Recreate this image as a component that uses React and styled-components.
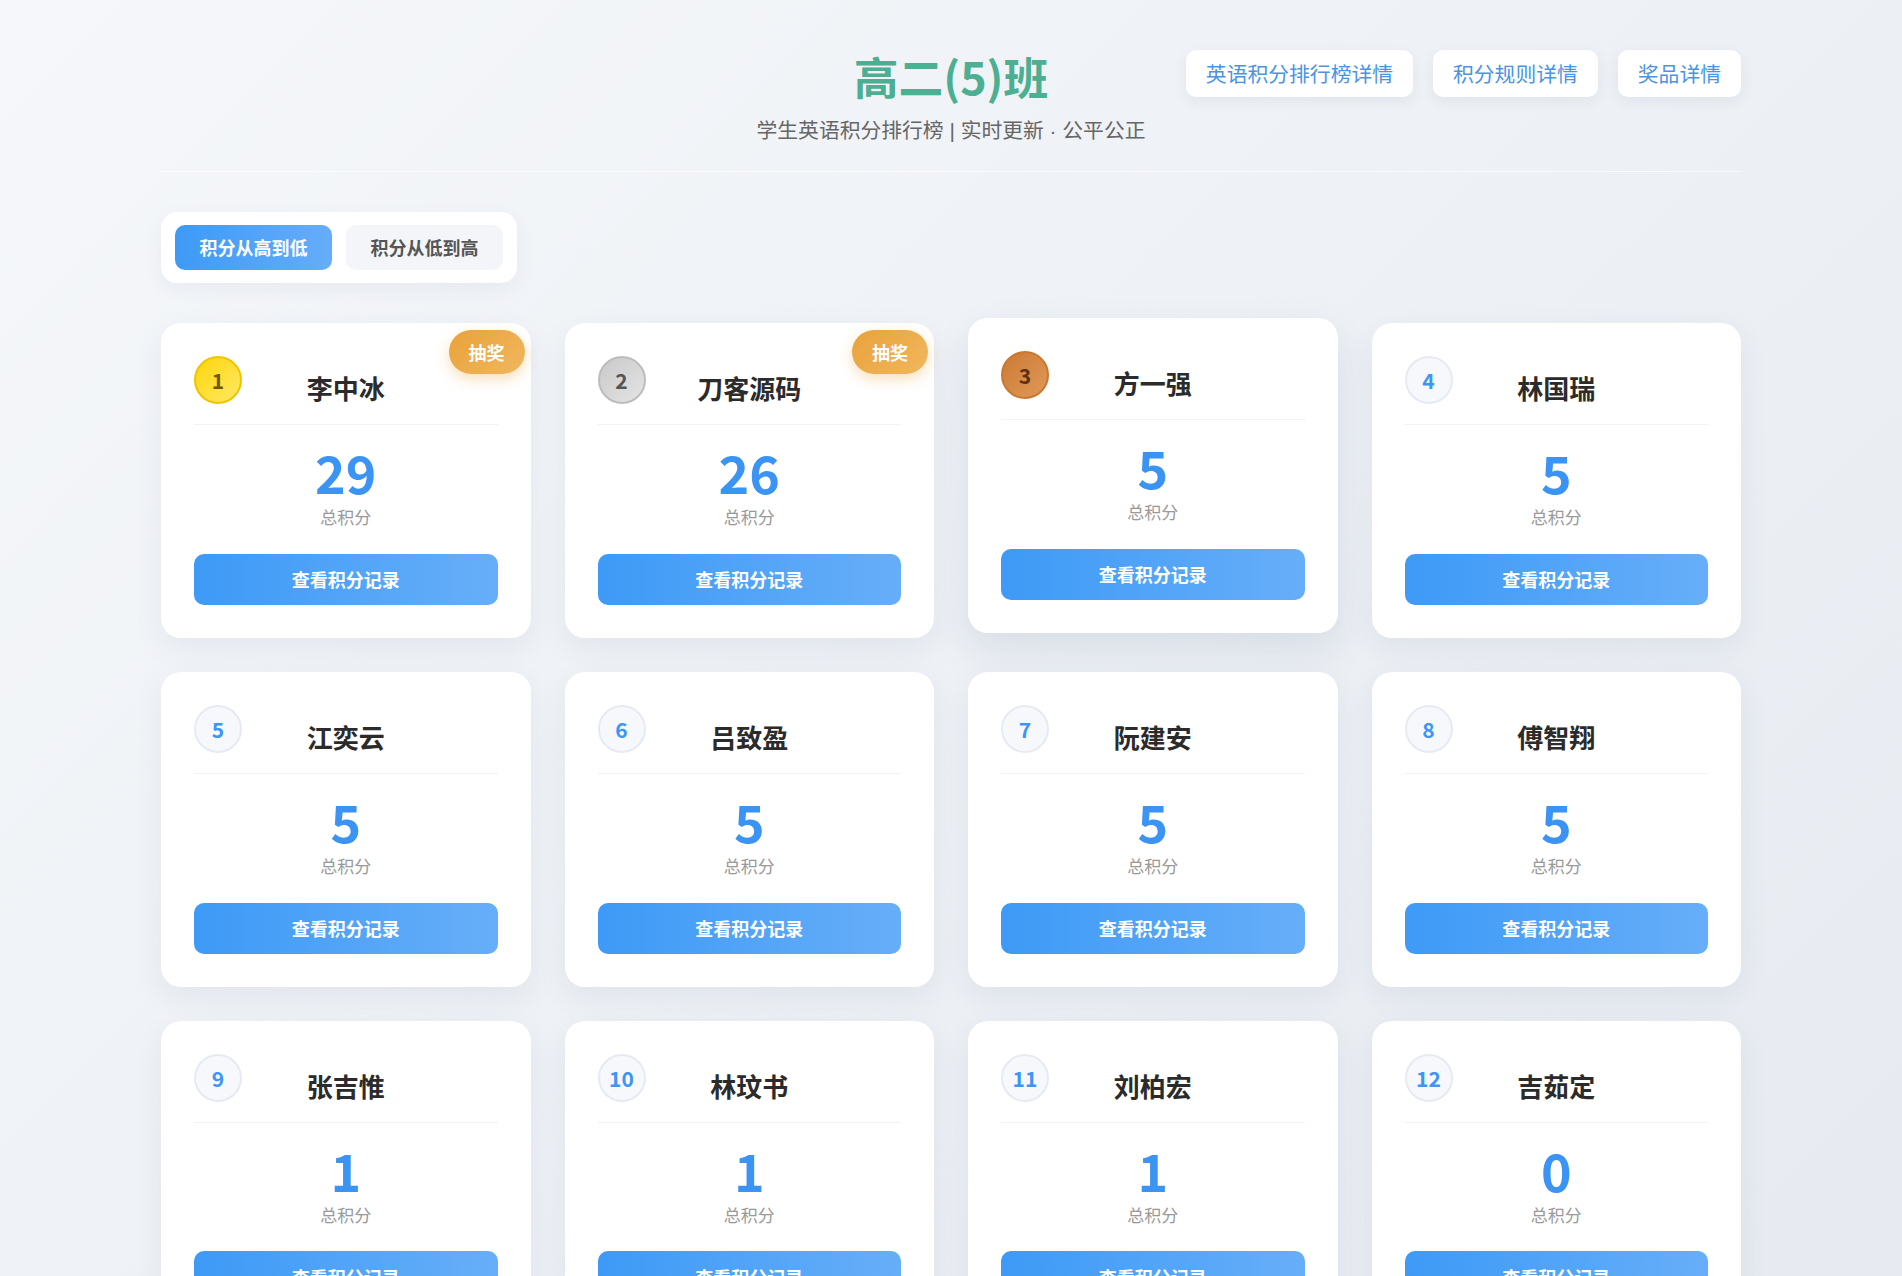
import styled, { createGlobalStyle, css } from 'styled-components';

const students = [
  { rank: 1, name: '李中冰', score: 29, lottery: true },
  { rank: 2, name: '刀客源码', score: 26, lottery: true },
  { rank: 3, name: '方一强', score: 5, raised: true },
  { rank: 4, name: '林国瑞', score: 5 },
  { rank: 5, name: '江奕云', score: 5 },
  { rank: 6, name: '吕致盈', score: 5 },
  { rank: 7, name: '阮建安', score: 5 },
  { rank: 8, name: '傅智翔', score: 5 },
  { rank: 9, name: '张吉惟', score: 1 },
  { rank: 10, name: '林玟书', score: 1 },
  { rank: 11, name: '刘柏宏', score: 1 },
  { rank: 12, name: '吉茹定', score: 0 },
];

const GlobalStyle = createGlobalStyle`
  * { box-sizing: border-box; }
  body {
    margin: 0;
    font-family: "Noto Sans CJK SC", "Noto Sans", sans-serif;
    background: linear-gradient(135deg, #f5f7fa 0%, #e6eaf0 100%);
    min-height: 100vh;
    color: #333;
  }
`;

function App() {
  return (
    <>
      <GlobalStyle />
      <Page>
        <Header>
          <span />
          <TitleBlock>
            <Title>高二(5)班</Title>
            <Subtitle>学生英语积分排行榜 | 实时更新 · 公平公正</Subtitle>
          </TitleBlock>
          <HeaderLinks>
            <LinkButton>英语积分排行榜详情</LinkButton>
            <LinkButton>积分规则详情</LinkButton>
            <LinkButton>奖品详情</LinkButton>
          </HeaderLinks>
        </Header>

        <SortPanel>
          <SortButton active>积分从高到低</SortButton>
          <SortButton>积分从低到高</SortButton>
        </SortPanel>

        <Grid>
          {students.map((s) => (
            <Card key={s.rank} raised={s.raised}>
              {s.lottery && <LotteryTag>抽奖</LotteryTag>}
              <CardHeader>
                <RankBadge rank={s.rank}>{s.rank}</RankBadge>
                <Name>{s.name}</Name>
              </CardHeader>
              <Score>{s.score}</Score>
              <ScoreLabel>总积分</ScoreLabel>
              <RecordButton>查看积分记录</RecordButton>
            </Card>
          ))}
        </Grid>
      </Page>
    </>
  );
}

export default App;

const Page = styled.div`
  max-width: 1580px;
  margin: 0 auto;
  padding: 49px 0 40px;
`;

const Header = styled.header`
  display: grid;
  grid-template-columns: 1fr auto 1fr;
  align-items: start;
  padding-bottom: 25px;
  border-bottom: 1px solid #fafbfc;
  margin-bottom: 40px;
`;

const TitleBlock = styled.div`
  text-align: center;
`;

const Title = styled.h1`
  margin: 0;
  font-size: 44.8px;
  line-height: 1.2;
  font-weight: 700;
  color: #4caf91;
`;

const Subtitle = styled.p`
  margin: 12px 0 0;
  font-family: "Liberation Sans", "Noto Sans CJK SC", sans-serif;
  font-size: 20.8px;
  line-height: 1.5;
  color: #666;
`;

const HeaderLinks = styled.div`
  display: flex;
  justify-content: flex-end;
  gap: 20px;
  margin-top: 1px;
`;

const LinkButton = styled.button`
  font-family: inherit;
  font-size: 20.8px;
  line-height: 1.3;
  padding: 10px 20px;
  border: none;
  border-radius: 10px;
  background: #fff;
  color: #4a94e2;
  box-shadow: 0 4px 14px rgba(40, 70, 120, 0.07);
  cursor: pointer;
`;

const SortPanel = styled.div`
  display: inline-flex;
  gap: 14px;
  padding: 13px 14px;
  background: #fff;
  border-radius: 16px;
  box-shadow: 0 6px 20px rgba(40, 70, 120, 0.06);
  margin-bottom: 40px;
`;

const SortButton = styled.button`
  font-family: inherit;
  width: 157px;
  height: 45px;
  border: none;
  border-radius: 10px;
  font-size: 18px;
  font-weight: 700;
  cursor: pointer;
  ${({ active }) =>
    active
      ? css`
          background: linear-gradient(90deg, #3d9af6, #66adf9);
          color: #fff;
        `
      : css`
          background: #f3f5f8;
          color: #555;
        `}
`;

const Grid = styled.div`
  display: grid;
  grid-template-columns: repeat(4, 1fr);
  gap: 34px;
`;

const Card = styled.div`
  position: relative;
  background: #fff;
  border-radius: 20px;
  padding: 33px;
  text-align: center;
  box-shadow: 0 10px 30px rgba(40, 70, 120, 0.07);
  ${({ raised }) =>
    raised &&
    css`
      transform: translateY(-5px);
      box-shadow: 0 16px 38px rgba(40, 70, 120, 0.11);
    `}
`;

const LotteryTag = styled.span`
  position: absolute;
  top: 7px;
  right: 6px;
  height: 44px;
  padding: 0 20px;
  display: flex;
  align-items: center;
  border-radius: 22px;
  background: linear-gradient(135deg, #e8a23a, #f1b75e);
  color: #fff;
  font-size: 18px;
  font-weight: 700;
  box-shadow: 0 5px 14px rgba(232, 162, 58, 0.35);
`;

const CardHeader = styled.div`
  position: relative;
  padding: 14px 0 18px;
  border-bottom: 1px solid #f0f2f5;
`;

const rankStyles = {
  1: css`
    background: linear-gradient(135deg, #ffd60a, #ffe866);
    border: 2px solid #f0c400;
    color: #6f5600;
  `,
  2: css`
    background: linear-gradient(135deg, #c9c9c9, #e4e4e4);
    border: 2px solid #bdbdbd;
    color: #555;
  `,
  3: css`
    background: linear-gradient(135deg, #cc7a34, #e0995a);
    border: 2px solid #c9782f;
    color: #5a3010;
  `,
};

const RankBadge = styled.div`
  position: absolute;
  top: 0;
  left: 0;
  width: 48px;
  height: 48px;
  border-radius: 50%;
  display: flex;
  align-items: center;
  justify-content: center;
  font-size: 21px;
  font-weight: 700;
  ${({ rank }) =>
    rankStyles[rank] ||
    css`
      background: #f6f8fc;
      border: 2px solid #e6eaf3;
      color: #3d95f5;
    `}
`;

const Name = styled.h3`
  margin: 0;
  font-size: 26px;
  line-height: 36px;
  font-weight: 700;
  color: #2b2b2b;
`;

const Score = styled.div`
  margin-top: 21px;
  font-size: 52px;
  line-height: 52px;
  font-weight: 700;
  color: #3b93f3;
`;

const ScoreLabel = styled.div`
  margin-top: 7px;
  font-size: 17px;
  line-height: 1.4;
  color: #999;
`;

const RecordButton = styled.button`
  font-family: inherit;
  display: block;
  width: 100%;
  height: 51px;
  margin-top: 25px;
  border: none;
  border-radius: 10px;
  background: linear-gradient(90deg, #3d9af6, #67aef9);
  color: #fff;
  font-size: 18px;
  font-weight: 700;
  cursor: pointer;
`;
